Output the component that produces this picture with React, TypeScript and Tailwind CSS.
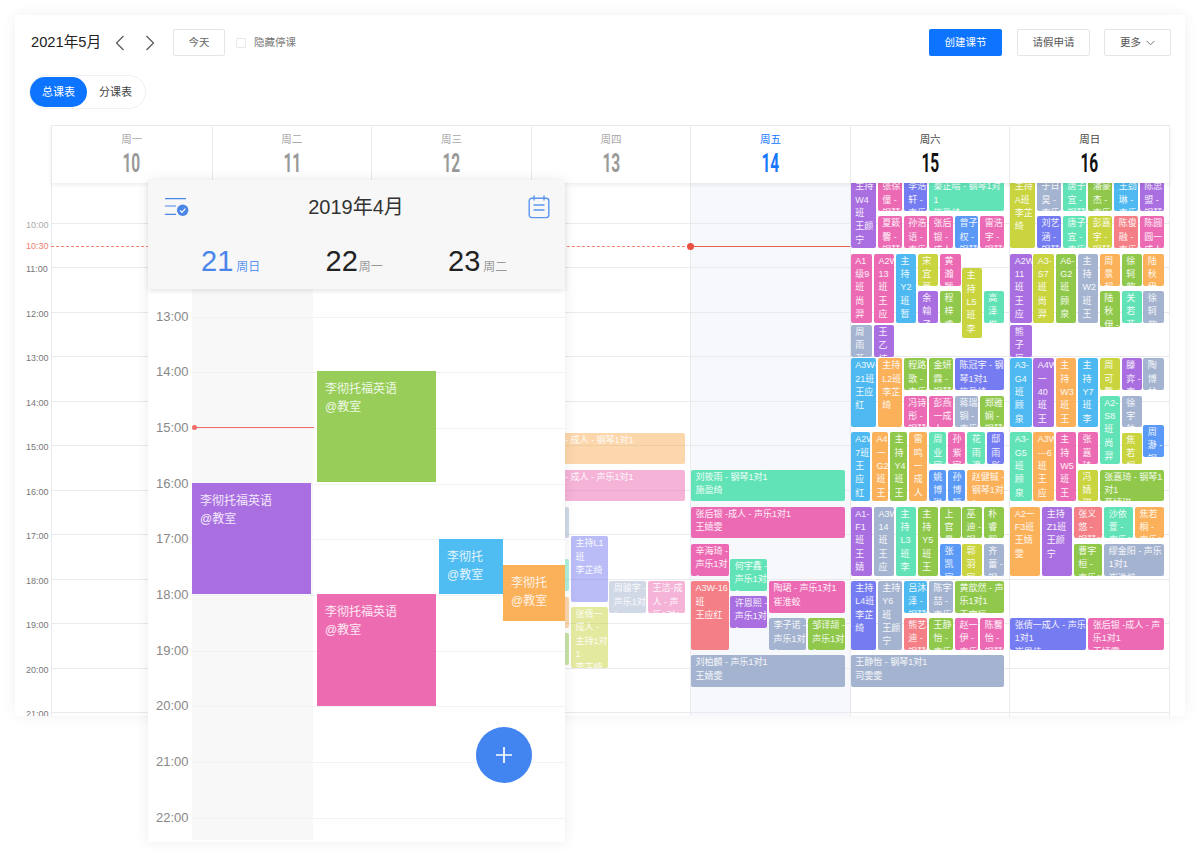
import React from "react";

const C: Record<string, string> = {
  P: "bg-[#a96ee0]",
  K: "bg-[#ec6ab3]",
  I: "bg-[#757bf0]",
  T: "bg-[#62e3b7]",
  G: "bg-[#90c84b]",
  L: "bg-[#c9d43f]",
  B: "bg-[#4db9f0]",
  O: "bg-[#fbb05a]",
  S: "bg-[#a4b3cf]",
  R: "bg-[#f47f86]",
  A: "bg-[#5b99f6]",
};

type Ev = [number, number, number, number, string, string];
type Group = { ox: number; oy: number; faded?: boolean; items: Ev[] };

const groups: Group[] = [
  {
    ox: 845,
    oy: 175,
    items: [
      [17, 13, 92, 218, "P", "主持|W4|班|王颜|宁"],
      [98, 13, 170, 108, "K", "张徐|僮 -|钢琴"],
      [176, 13, 246, 108, "I", "李浩|轩 -|声乐"],
      [252, 13, 478, 108, "T", "秦正暗 - 钢琴1对|1|施盈绮"],
      [98, 124, 170, 218, "K", "夏簌|馨 -|钢琴"],
      [176, 124, 246, 218, "K", "孙浩|语 -|声乐"],
      [252, 124, 324, 218, "K", "张后|银 -|成人"],
      [330, 124, 400, 218, "A", "曾子|权 -|钢琴"],
      [406, 124, 478, 218, "K", "雷浩|宇 -|钢琴"],
      [496, 13, 570, 218, "L", "主持|A班|李芷|绮"],
      [576, 13, 648, 108, "S", "于日|昊 -|声乐"],
      [654, 13, 724, 108, "T", "唐子|宜 -|钢琴"],
      [730, 13, 802, 108, "G", "潘豪|杰 -|声乐"],
      [808, 13, 878, 108, "B", "王劲|琳 -|声乐"],
      [884, 13, 956, 108, "P", "陈思|盟 -|钢琴"],
      [576, 124, 648, 218, "I", "刘艺|涵 -|钢琴"],
      [654, 124, 724, 218, "T", "唐子|宜 -|声乐"],
      [730, 124, 802, 218, "L", "彭嘉|宇 -|钢琴"],
      [808, 124, 878, 218, "R", "陈俊|融 -|声乐"],
      [884, 124, 956, 218, "K", "陈圆|圆一|成人"],
      [17, 236, 81, 444, "K", "A1|级9|班|尚|羿"],
      [87, 236, 147, 444, "K", "A2W|13|班|王|应"],
      [153, 236, 213, 444, "B", "主|持|Y2|班|暂"],
      [218, 236, 280, 332, "L", "宋|宜|蕾"],
      [285, 236, 347, 332, "K", "黄|瀚|颖"],
      [351, 280, 411, 489, "L", "主|持|L5|班|李"],
      [218, 348, 280, 444, "P", "余|翰|子"],
      [285, 348, 347, 444, "G", "程|梓|睿"],
      [416, 348, 478, 444, "T", "高|泽|楷"],
      [17, 450, 81, 545, "S", "周|雨|菲"],
      [87, 450, 147, 545, "P", "王|乙|楠"],
      [496, 236, 560, 444, "P", "A2W|11|班|王|应"],
      [565, 236, 627, 444, "L", "A3-|S7|班|尚|羿"],
      [632, 236, 694, 444, "G", "A6-|G2|班|顾|泉"],
      [699, 236, 759, 444, "S", "主|持|W2|班|王"],
      [764, 236, 825, 332, "O", "周|景|超"],
      [830, 236, 890, 332, "G", "徐|轲|歆"],
      [895, 236, 956, 332, "O", "陆|秋|伊"],
      [764, 348, 825, 456, "G", "陆|秋|伊 -"],
      [830, 348, 890, 444, "T", "关|若|菲"],
      [895, 348, 956, 444, "S", "徐|轲|歆"],
      [496, 450, 560, 545, "P", "熊|子|辰"],
    ],
  },
  {
    ox: 845,
    oy: 355,
    items: [
      [17, 10, 92, 217, "B", "A3W-|21班|王应|红"],
      [98, 10, 170, 217, "O", "主持|L2班|李芷|绮"],
      [176, 10, 246, 105, "G", "程路|歌 -|声乐"],
      [252, 10, 324, 105, "G", "金妍|霖 -|钢琴"],
      [330, 10, 478, 105, "I", "陈冠宇 - 钢|琴1对1|施盈绮"],
      [176, 122, 246, 217, "K", "冯诗|彤 -|钢琴"],
      [252, 122, 324, 217, "K", "彭燕|一成|人"],
      [330, 122, 400, 217, "S", "蒋瑞|铜 -|声乐"],
      [406, 122, 478, 217, "G", "郑雅|娴 -|钢琴"],
      [17, 232, 75, 439, "B", "A2W|7班|王|应|红"],
      [81, 232, 129, 439, "O", "A4|一|G2|班|王"],
      [135, 232, 187, 439, "G", "主|持|Y4|班|王"],
      [193, 232, 245, 439, "O", "雷|鸣|一|成|人"],
      [251, 232, 303, 328, "T", "周|业|宸"],
      [309, 232, 361, 328, "K", "孙|紫|宸"],
      [367, 232, 419, 328, "T", "花|雨|潼"],
      [425, 232, 478, 328, "I", "邸|雨|彤"],
      [251, 344, 303, 439, "A", "姚|博|琳"],
      [309, 344, 361, 439, "A", "孙|博|颖"],
      [367, 344, 478, 439, "O", "赵健铖 -|钢琴1对|1"],
      [17, 455, 81, 662, "P", "A1-|F1|班|王|婧"],
      [87, 455, 147, 662, "S", "A3W|14|班|王|应"],
      [153, 455, 213, 662, "T", "主|持|L3|班|李"],
      [218, 455, 280, 662, "G", "主|持|Y5|班|王"],
      [285, 455, 347, 550, "G", "上|官|曼"],
      [351, 455, 411, 550, "G", "巫|迪 -|钢"],
      [416, 455, 478, 550, "G", "朴|睿|熙"],
      [285, 567, 347, 662, "A", "张|凯|宸"],
      [351, 567, 411, 662, "L", "郭|羽|宸"],
      [416, 567, 478, 662, "S", "齐|蕾 -|钢"],
      [496, 10, 560, 217, "B", "A3-|G4|班|顾|泉"],
      [565, 10, 627, 217, "P", "A4W|一|40|班|王"],
      [632, 10, 694, 217, "O", "主|持|W3|班|王"],
      [699, 10, 759, 217, "B", "主|持|Y7|班|李"],
      [764, 10, 825, 105, "L", "周|可|馨"],
      [830, 10, 890, 105, "P", "滕|弈 -|声"],
      [895, 10, 956, 105, "S", "陶|博|林"],
      [764, 122, 825, 328, "T", "A2-|S8|班|尚|羿"],
      [830, 122, 890, 217, "S", "徐|宇|舶"],
      [895, 210, 956, 305, "A", "周|瀞 -|钢"],
      [830, 233, 890, 328, "L", "焦|若|桐"],
      [496, 232, 560, 439, "T", "A3-|G5|班|顾|泉"],
      [565, 232, 627, 439, "O", "A3W|—6|班|王|应"],
      [632, 232, 694, 439, "K", "主|持|W5|班|王"],
      [699, 232, 759, 328, "K", "张|嘉|琦"],
      [699, 344, 759, 439, "L", "冯|婧|琪"],
      [764, 344, 956, 439, "G", "张嘉琦 - 钢琴1|对1|蔡婧琪"],
      [496, 455, 586, 662, "O", "A2一|F3班|王婧|雯"],
      [592, 455, 680, 662, "P", "主持|Z1班|王颜|宁"],
      [686, 455, 772, 550, "R", "张义|悠 -|钢琴1"],
      [778, 455, 864, 550, "T", "沙依|萱 -|声乐1"],
      [870, 455, 956, 550, "O", "焦若|桐 -|声乐1"],
      [686, 567, 772, 662, "G", "曹宇|桓 -|声乐1"],
      [778, 567, 956, 662, "S", "缪金阳 - 声乐|1对1|崔淮蛟"],
    ],
  },
  {
    ox: 845,
    oy: 530,
    items: [
      [17, 153, 92, 359, "I", "主持|L4班|李芷|绮"],
      [98, 153, 170, 359, "S", "主持|Y6|班|王颜|宁"],
      [176, 153, 246, 248, "B", "吕沐|泽 -|钢琴"],
      [252, 153, 324, 248, "S", "陈宇|喆 -|声乐"],
      [330, 153, 478, 248, "G", "黄歆然 - 声|乐1对1|于家恒"],
      [176, 264, 246, 359, "R", "熊艺|迪 -|钢琴"],
      [252, 264, 324, 359, "G", "王静|怡 -|声乐"],
      [330, 264, 400, 359, "K", "赵一|伊 -|声乐"],
      [406, 264, 478, 359, "K", "陈馨|怡 -|钢琴"],
      [17, 376, 478, 470, "S", "王静怡 - 钢琴1对1|司雯雯"],
      [496, 264, 724, 359, "I", "张倩一成人 - 声乐|1对1|崔思佳"],
      [730, 264, 956, 359, "K", "张后银 -成人 - 声|乐1对1|王婧雯"],
    ],
  },
  {
    ox: 560,
    oy: 420,
    faded: true,
    items: [
      [-87, 38, 375, 132, "O", "张思瑶 - 成人 - 钢琴1对1"],
      [-87, 150, 375, 244, "K", "张后银 - 成人 - 声乐1对1"],
      [-87, 260, 27, 355, "S", ""],
      [-87, 418, 27, 512, "T", ""],
      [-87, 530, 27, 625, "O", ""],
      [-87, 640, 27, 735, "G", ""],
      [33, 349, 144, 545, "I", "主持L1|班|李芷绮"],
      [148, 484, 258, 578, "S", "周骏宇 -|声乐1对|1"],
      [264, 484, 375, 578, "K", "王洁-成|人 - 声|乐1对1"],
      [33, 561, 144, 745, "L", "张倩一|成人 -|主持1对|1|李芷绮"],
    ],
  },
  {
    ox: 560,
    oy: 420,
    items: [
      [393, 150, 854, 244, "T", "刘筱雨 - 钢琴1对1|施盈绮"],
      [393, 260, 854, 355, "K", "张后银 -成人 - 声乐1对1|王婧雯"],
      [393, 372, 507, 467, "K", "辛海琦 -|声乐1对|1"],
      [511, 417, 622, 512, "T", "何宇鑫 -|声乐1对|1"],
      [393, 484, 507, 689, "R", "A3W-16|班|王应红"],
      [511, 528, 622, 623, "P", "许恩熙 -|声乐1对|1"],
      [627, 484, 854, 578, "K", "陶珺 - 声乐1对1|崔淮蛟"],
      [627, 595, 739, 689, "S", "李子诺 -|声乐1对|1"],
      [743, 595, 854, 689, "G", "邹译颉 -|声乐1对|1"],
      [393, 706, 854, 800, "S", "刘柏麟 - 声乐1对1|王婧雯"],
    ],
  },
];

const days = [
  { w: "周一", n: "10", wc: "text-[#a8a8a8]", nc: "text-[#999999]" },
  { w: "周二", n: "11", wc: "text-[#a8a8a8]", nc: "text-[#999999]" },
  { w: "周三", n: "12", wc: "text-[#a8a8a8]", nc: "text-[#999999]" },
  { w: "周四", n: "13", wc: "text-[#a8a8a8]", nc: "text-[#999999]" },
  { w: "周五", n: "14", wc: "text-[#1677ff]", nc: "text-[#1677ff]" },
  { w: "周六", n: "15", wc: "text-[#444444]", nc: "text-[#111111]" },
  { w: "周日", n: "16", wc: "text-[#444444]", nc: "text-[#111111]" },
];

const gridRows = ["10:00", "11:00", "12:00", "13:00", "14:00", "15:00", "16:00", "17:00", "18:00", "19:00", "20:00", "21:00"];
const phoneRows = ["13:00", "14:00", "15:00", "16:00", "17:00", "18:00", "19:00", "20:00", "21:00", "22:00"];

const PLOT_X = 51;
const PLOT_Y = 183;

function Events() {
  return (
    <>
      {groups.map((g, gi) =>
        g.items.map((e, i) => {
          const left = g.ox + e[0] / 3 - PLOT_X;
          const top = g.oy + e[1] / 3 - PLOT_Y;
          const width = (e[2] - e[0]) / 3;
          const height = (e[3] - e[1]) / 3;
          return (
            <div
              key={gi + "-" + i}
              className={
                "absolute overflow-hidden rounded-[2px] pl-[4.5px] pt-px text-[9px] leading-[13.3px] text-white/90 " +
                C[e[4]] +
                (g.faded ? " opacity-50" : "")
              }
              style={{ left, top, width, height }}
            >
              {e[5].split("|").map((l, k) => (
                <div key={k} className="whitespace-nowrap">
                  {l}
                </div>
              ))}
            </div>
          );
        })
      )}
    </>
  );
}

function Chevron({ dir }: { dir: "l" | "r" }) {
  return (
    <svg width="10" height="16" viewBox="0 0 10 16" fill="none" stroke="#555555" strokeWidth="1.2">
      <path d={dir === "l" ? "M8.5 1 L1.5 8 L8.5 15" : "M1.5 1 L8.5 8 L1.5 15"} />
    </svg>
  );
}

function PhoneEvent({ cls, a, b = "@教室" }: { cls: string; a: string; b?: string }) {
  return (
    <div className={"absolute px-[8px] pt-[9px] text-[12px] leading-[18px] text-white/85 " + cls}>
      <div className="whitespace-nowrap">{a}</div>
      <div>{b}</div>
    </div>
  );
}

function Phone() {
  return (
    <div className="absolute left-[148px] top-[180px] z-20 flex h-[662px] w-[417px] flex-col rounded-[3px] bg-white shadow-[0_0_14px_rgba(0,0,0,0.08)]">
      <div className="relative z-10 h-[109px] shrink-0 rounded-t-[3px] bg-[#f7f7f8] shadow-[0_2px_5px_rgba(0,0,0,0.1)]">
        <div className="flex h-[54px] items-center justify-between pl-[16px] pr-[15px]">
          <svg width="26" height="20" viewBox="0 0 26 20" fill="none" stroke="#4a86e8" strokeWidth="1.2">
            <path d="M1 1.7H22M1 9H12M1 17.3H12" />
            <circle cx="18.7" cy="13.3" r="5.7" fill="#4a86e8" stroke="none" />
            <path d="M16 13.3l2 2l3.4-3.6" stroke="#ffffff" strokeWidth="1.2" />
          </svg>
          <div className="-translate-x-[3px] text-[20px] leading-[28px] text-[#333333]">2019年4月</div>
          <svg width="22" height="24" viewBox="0 0 22 24" fill="none" stroke="#5b95ee" strokeWidth="1.4">
            <rect x="1.2" y="3.2" width="19.6" height="19.4" rx="2.5" />
            <path d="M6 0.5V5.5M16 0.5V5.5M5.5 10H16.5M5.5 15H16.5" />
          </svg>
        </div>
        <div className="flex items-baseline pl-[53px] pt-[12px] leading-[30px]">
          <div className="flex w-[124.5px] items-baseline gap-[3px]">
            <span className="text-[29px] text-[#4a86e8]">21</span>
            <span className="text-[12px] text-[#5b95ee]">周日</span>
          </div>
          <div className="flex w-[122.5px] items-baseline gap-[1px]">
            <span className="text-[29px] text-[#222222]">22</span>
            <span className="text-[12px] text-[#999999]">周一</span>
          </div>
          <div className="flex items-baseline gap-[3px]">
            <span className="text-[29px] text-[#222222]">23</span>
            <span className="text-[12px] text-[#999999]">周二</span>
          </div>
        </div>
      </div>
      <div className="relative min-h-0 flex-1 overflow-hidden rounded-b-[3px] pt-[27.5px]">
        <div className="absolute bottom-[2px] left-[44px] top-0 w-[121px] bg-[#f8f8f9]" />
        {phoneRows.map((t) => (
          <div key={t} className="relative flex h-[55.7px]">
            <div className="h-[14px] w-[44px] -translate-y-1/2 pl-[8px] text-[13px] leading-[14px] text-[#888888]">{t}</div>
            <div className="flex-1 border-t border-[#f1f2f3]" />
          </div>
        ))}
        <div className="absolute left-[44px] top-[138px] h-0 w-[122px] border-t border-[#f26b6b]" />
        <div className="absolute left-[44px] top-[136px] size-[5px] rounded-full bg-[#f26b6b]" />
        <PhoneEvent cls="left-[169px] top-[82px] h-[111px] w-[119px] bg-[#97cd58]" a="李彻托福英语" />
        <PhoneEvent cls="left-[44px] top-[194px] h-[111px] w-[119px] bg-[#a96ee0]" a="李彻托福英语" />
        <PhoneEvent cls="left-[169px] top-[305px] h-[112px] w-[119px] bg-[#ed6cb1]" a="李彻托福英语" />
        <PhoneEvent cls="left-[291px] top-[250px] h-[55px] w-[64px] bg-[#4fbcf2]" a="李彻托" />
        <PhoneEvent cls="left-[355px] top-[276px] h-[56px] w-[62px] bg-[#fbb05a]" a="李彻托" />
        <div className="absolute left-[328px] top-[438px] flex size-[56px] items-center justify-center rounded-full bg-[#4285f0]">
          <svg width="18" height="18" viewBox="0 0 18 18" stroke="#ffffff" strokeWidth="1.7">
            <path d="M1 9H17M9 1V17" />
          </svg>
        </div>
      </div>
    </div>
  );
}

export default function App() {
  return (
    <div className="relative h-[857px] w-[1200px] overflow-hidden bg-white font-['Liberation_Sans','Noto_Sans_CJK_SC',sans-serif]">
      <div className="pt-[15px]">
        <div className="ml-[15px] h-[701px] w-[1170px] overflow-hidden bg-white shadow-[0_0_14px_rgba(0,0,0,0.06)]">
          <div className="flex items-center pl-[16px] pr-[14px] pt-[14px]">
            <div className="w-[70px] whitespace-nowrap text-[14.7px] leading-[27px] text-[#222222]">2021年5月</div>
            <div className="ml-[14px]">
              <Chevron dir="l" />
            </div>
            <div className="ml-[20px]">
              <Chevron dir="r" />
            </div>
            <button className="ml-[18px] flex h-[27px] w-[52px] items-center justify-center rounded-[2px] border border-[#e3e5e8] text-[10.5px] text-[#666666]">
              今天
            </button>
            <div className="ml-[11px] size-[10px] rounded-[1px] border border-[#e6e8eb]" />
            <div className="ml-[8px] text-[10.5px] text-[#777777]">隐藏停课</div>
            <button className="ml-auto flex h-[27px] w-[73px] items-center justify-center rounded-[2px] bg-[#0d74ff] text-[10.5px] text-white">
              创建课节
            </button>
            <button className="ml-[15px] flex h-[27px] w-[73px] items-center justify-center rounded-[2px] border border-[#e3e5e8] text-[10.5px] text-[#555555]">
              请假申请
            </button>
            <button className="ml-[14px] flex h-[27px] w-[67px] items-center justify-center gap-[5px] rounded-[2px] border border-[#e3e5e8] text-[10.5px] text-[#555555]">
              更多
              <svg width="9" height="6" viewBox="0 0 9 6" fill="none" stroke="#777777" strokeWidth="1">
                <path d="M0.5 0.8L4.5 4.8L8.5 0.8" />
              </svg>
            </button>
          </div>
          <div className="ml-[14px] mt-[19px] flex h-[34px] w-[117px] items-center rounded-full border border-[#f0f0f2]">
            <div className="flex h-[30px] w-[57px] items-center justify-center rounded-full bg-[#0d74ff] text-[11px] text-white">总课表</div>
            <div className="flex h-[30px] w-[57px] items-center justify-center text-[11px] text-[#444444]">分课表</div>
          </div>
          <div className="relative z-10 ml-[36px] mt-[15.5px] grid h-[58.5px] w-[1119px] grid-cols-7 border-l border-r border-t border-[#e8eaed] bg-white shadow-[0_2px_4px_rgba(0,0,0,0.07)]">
            {days.map((d, i) => (
              <div key={d.w} className={"flex flex-col items-center " + (i > 0 ? "border-l border-[#e8eaed]" : "")}>
                <div className={"mt-[7px] text-[10.5px] leading-[13px] " + d.wc}>{d.w}</div>
                <div className={"mt-[4px] scale-x-[0.62] text-[25px] font-bold leading-[28px] font-['Roboto',sans-serif] " + d.nc}>{d.n}</div>
              </div>
            ))}
          </div>
          <div className="flex h-[533px]">
            <div className="flex w-[36px] shrink-0 flex-col pt-[41.5px]">
              {gridRows.map((t, i) => (
                <div key={t} className="h-[44.5px] shrink-0">
                  <div className={"h-[12px] -translate-y-1/2 pl-[11px] text-[9px] leading-[12px] " + (i === 0 ? "text-[#aaaaaa]" : "text-[#777777]")}>{t}</div>
                </div>
              ))}
            </div>
            <div className="relative w-[1119px] overflow-hidden">
              <div className="absolute inset-0 grid grid-cols-7 border-l border-r border-[#e8eaed]">
                {days.map((d, i) => (
                  <div key={d.n} className={(i > 0 ? "border-l border-[#e8eaed] " : "") + (i === 4 ? "bg-[#f6f8fc]" : "")} />
                ))}
              </div>
              <div className="relative h-[40.5px] border-b border-[#e8eaed]" />
              {gridRows.map((t) => (
                <div key={t} className="relative h-[44.5px] border-b border-[#e8eaed]" />
              ))}
              <div className="absolute left-0 top-[63px] w-[639px] border-t border-dashed border-[#f0806f]" />
              <div className="absolute left-[639px] top-[63px] w-[160px] border-t border-[#e8604c]" />
              <div className="absolute left-[636px] top-[60px] size-[7px] rounded-full bg-[#e8503f]" />
              <Events />
            </div>
          </div>
        </div>
      </div>
      <div className="absolute left-[26px] top-[240px] z-10 text-[9px] leading-[12px] text-[#f0806f]">10:30</div>
      <Phone />
    </div>
  );
}
